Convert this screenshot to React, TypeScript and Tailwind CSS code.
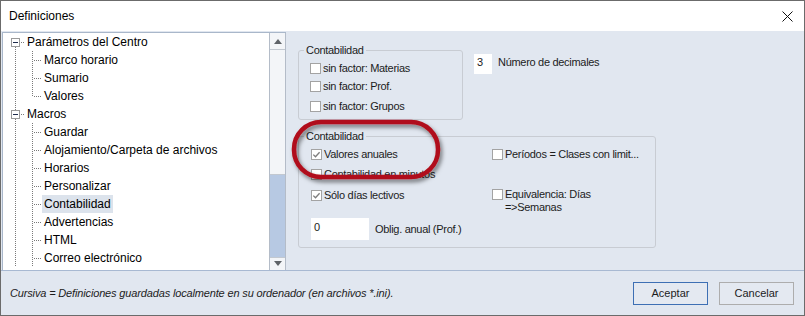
import React from "react";

const font = { fontFamily: '"Liberation Sans", Arial, sans-serif' };

const Check = ({ checked }: { checked?: boolean }) => (
  <span className="w-[11px] h-[11px] shrink-0 border border-[#a3a3a3] bg-white flex items-center justify-center">
    {checked ? (
      <svg width="9" height="9" viewBox="0 0 9 9">
        <path d="M1.3 4.6 L3.5 6.8 L7.6 2.2" stroke="#7d7d7d" strokeWidth="1.3" fill="none" />
      </svg>
    ) : null}
  </span>
);

const Option = ({ label, checked }: { label: string; checked?: boolean }) => (
  <div className="flex items-center h-[18px] gap-[2px]">
    <Check checked={checked} />
    <span className="whitespace-nowrap">{label}</span>
  </div>
);

// dotted tree connectors
const RootGutter = ({ above, below }: { above?: boolean; below?: boolean }) => (
  <svg width="22" height="18" className="shrink-0" shapeRendering="crispEdges">
    {above ? <line x1="12.5" y1="0" x2="12.5" y2="5" stroke="#7a7a7a" strokeDasharray="1 1" /> : null}
    {below ? <line x1="12.5" y1="14" x2="12.5" y2="18" stroke="#7a7a7a" strokeDasharray="1 1" /> : null}
    <rect x="8.5" y="5.5" width="8" height="8" fill="#fff" stroke="#9a9a9a" />
    <line x1="10" y1="9.5" x2="15" y2="9.5" stroke="#1f2d4d" />
    <line x1="18" y1="9.5" x2="22" y2="9.5" stroke="#7a7a7a" strokeDasharray="1 1" />
  </svg>
);

const ChildGutter = ({ last, trunk }: { last?: boolean; trunk?: boolean }) => (
  <div className="flex shrink-0">
    <svg width="22" height="18" shapeRendering="crispEdges">
      {trunk ? <line x1="12.5" y1="0" x2="12.5" y2="18" stroke="#7a7a7a" strokeDasharray="1 1" /> : null}
    </svg>
    <svg width="17" height="18" shapeRendering="crispEdges">
      <line x1="7.5" y1="0" x2="7.5" y2={last ? 10 : 18} stroke="#7a7a7a" strokeDasharray="1 1" />
      <line x1="9" y1="9.5" x2="17" y2="9.5" stroke="#7a7a7a" strokeDasharray="1 1" />
    </svg>
  </div>
);

type Row = { label: string; root?: boolean; last?: boolean; selected?: boolean; above?: boolean };

const rows: Row[] = [
  { label: "Parámetros del Centro", root: true },
  { label: "Marco horario" },
  { label: "Sumario" },
  { label: "Valores", last: true },
  { label: "Macros", root: true, above: true },
  { label: "Guardar" },
  { label: "Alojamiento/Carpeta de archivos" },
  { label: "Horarios" },
  { label: "Personalizar" },
  { label: "Contabilidad", selected: true },
  { label: "Advertencias" },
  { label: "HTML" },
  { label: "Correo electrónico" },
];

const Tree = () => (
  <div className="flex w-[284px] mt-[1px] ml-[1px] border-t border-l border-[#a9b7ca] bg-white">
    <div className="flex-1 overflow-hidden text-[12px] text-black">
      {rows.map((r) => (
        <div key={r.label} className="flex h-[18px] items-center">
          {r.root ? <RootGutter above={r.above} below /> : <ChildGutter last={r.last} trunk />}
          <span
            className={`h-[18px] leading-[18px] px-[2px] whitespace-nowrap ${r.selected ? "bg-[#dce3ec]" : ""}`}
          >
            {r.label}
          </span>
        </div>
      ))}
    </div>
    <div className="w-[17px] flex flex-col border-l border-r border-[#b4bcc8]">
      <div className="h-[17px] bg-[#f3f5f8] border-b border-[#c2c8d0] flex items-center justify-center">
        <svg width="8" height="5" viewBox="0 0 8 5">
          <path d="M0 5 L4 0 L8 5 Z" fill="#5f6368" />
        </svg>
      </div>
      <div className="h-[125px] bg-[#f3f5f8] border-b border-[#c2c8d0]" />
      <div className="h-[82px] bg-[#b7c9e3]" />
      <div className="flex-1 bg-[#f3f5f8] border-t border-[#c2c8d0] flex items-start justify-center pt-[3px]">
        <svg width="8" height="5" viewBox="0 0 8 5">
          <path d="M0 0 L8 0 L4 5 Z" fill="#5f6368" />
        </svg>
      </div>
    </div>
  </div>
);

const Legend = ({ children }: { children: React.ReactNode }) => (
  <legend className="px-[2px] leading-[13px]">{children}</legend>
);

const Settings = () => (
  <div className="relative flex-1 pl-[12px] pt-[13px] text-[11px] tracking-[-0.3px] text-[#1c1c1c] leading-[13px]">
    <div className="flex items-start">
      <fieldset className="w-[165px] border border-[#c8ccd3] rounded-[3px] pl-[5px] pb-[4px]">
        <Legend>Contabilidad</Legend>
        <div className="ml-[6px] mt-[2px] flex flex-col">
          <Option label="sin factor: Materias" />
          <Option label="sin factor: Prof." />
          <div className="mt-[2px]">
            <Option label="sin factor: Grupos" />
          </div>
        </div>
      </fieldset>
      <div className="ml-[11px] mt-[10px] w-[18px] h-[20px] bg-white pl-[3px] pt-[2px]">3</div>
      <div className="ml-[6px] mt-[12px] whitespace-nowrap">Número de decimales</div>
    </div>

    <fieldset className="mt-[10px] w-[358px] border border-[#c8ccd3] rounded-[3px] pl-[5px] pb-[7px]">
      <Legend>Contabilidad</Legend>
      <div className="ml-[7px] mt-[2px] flex">
        <div className="w-[181px] flex flex-col">
          <Option label="Valores anuales" checked />
          <div className="mt-[2px]">
            <Option label="Contabilidad en minutos" />
          </div>
          <div className="mt-[3px]">
            <Option label="Sólo días lectivos" checked />
          </div>
          <div className="mt-[14px] flex items-center">
            <div className="w-[58px] h-[22px] bg-white pl-[3px] pt-[3px]">0</div>
            <span className="ml-[6px] whitespace-nowrap">Oblig. anual (Prof.)</span>
          </div>
        </div>
        <div className="flex flex-col">
          <Option label="Períodos = Clases con limit..." />
          <div className="mt-[25px] flex items-start gap-[2px]">
            <div className="mt-[1px]">
              <Check />
            </div>
            <div className="flex flex-col">
              <span>Equivalencia: Días</span>
              <span>=&gt;Semanas</span>
            </div>
          </div>
        </div>
      </div>
    </fieldset>

    {/* red highlight annotation */}
    <svg className="absolute left-[0px] top-[84px] pointer-events-none" width="172" height="80">
      <defs>
        <filter id="sh" x="-20%" y="-30%" width="140%" height="170%">
          <feDropShadow dx="2" dy="3" stdDeviation="2.2" floodColor="#000" floodOpacity="0.5" />
        </filter>
      </defs>
      <rect x="8" y="7" width="144" height="55" rx="27" ry="27" fill="none" stroke="#b0101a" strokeWidth="4.5" filter="url(#sh)" />
    </svg>
  </div>
);

export default function App() {
  return (
    <div
      className="w-[805px] h-[316px] border border-[#6b6b6b] flex flex-col bg-[#e1e7f0] overflow-hidden"
      style={font}
    >
      <div className="h-[30px] bg-white flex items-center justify-between pl-[8px] pr-[11px] text-[12px] text-black">
        <span>Definiciones</span>
        <svg width="11" height="11" viewBox="0 0 11 11">
          <path d="M0.5 0.5 L10.5 10.5 M10.5 0.5 L0.5 10.5" stroke="#111" strokeWidth="1" />
        </svg>
      </div>
      <div className="h-[239px] flex">
        <Tree />
        <Settings />
      </div>
      <div className="flex-1 border-t border-[#a8b9d2] flex items-center pl-[9px] pr-[10px] text-[11px] text-[#1c1c1c]">
        <span className="flex-1 italic tracking-[-0.15px]">
          Cursiva = Definiciones guardadas localmente en su ordenador (en archivos *.ini).
        </span>
        <div className="flex gap-[11px]">
          <button className="w-[75px] h-[23px] border border-[#3d6fb4] bg-[#e4e9f1]">Aceptar</button>
          <button className="w-[75px] h-[23px] border border-[#adadad] bg-[#e4e9f1]">Cancelar</button>
        </div>
      </div>
    </div>
  );
}
